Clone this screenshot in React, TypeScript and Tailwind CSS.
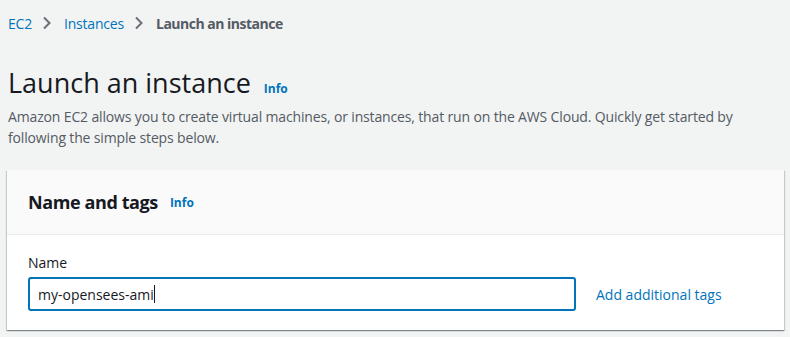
import React from "react";

export default function App() {
  return (
    <div
      className="w-[790px] h-[337px] overflow-hidden bg-[#f2f3f3] text-[#16191f]"
      style={{ fontFamily: '"Open Sans", "Noto Sans", Arial, sans-serif' }}
    >
      <div className="pl-[8px] pr-[6px]">
        {/* Breadcrumb */}
        <nav className="flex items-center h-[46px] text-[14px] tracking-[-0.2px]">
          <span className="text-[#0073bb]">EC2</span>
          <svg width="10" height="14" viewBox="0 0 10 14" className="ml-[10px] mr-[12px]">
            <path d="M2 1.5 L7.5 7 L2 12.5" fill="none" stroke="#687078" strokeWidth="2" />
          </svg>
          <span className="text-[#0073bb]">Instances</span>
          <svg width="10" height="14" viewBox="0 0 10 14" className="ml-[10px] mr-[12px]">
            <path d="M2 1.5 L7.5 7 L2 12.5" fill="none" stroke="#687078" strokeWidth="2" />
          </svg>
          <span className="font-bold text-[#545b64] tracking-[-0.5px]">Launch an instance</span>
        </nav>

        {/* Header */}
        <div className="mt-[19px] flex items-baseline">
          <h1 className="text-[27px] leading-[36px] font-normal text-[#16191f]">Launch an instance</h1>
          <span className="ml-[13px] text-[12px] font-bold text-[#0073bb]">Info</span>
        </div>
        <p className="text-[14px] leading-[21px] text-[#545b64] mt-[5px] tracking-[-0.15px]">
          Amazon EC2 allows you to create virtual machines, or instances, that run on the AWS Cloud. Quickly get started by following the simple steps below.
        </p>

        {/* Card */}
        <div className="mt-[22px] -ml-[1px] w-[777px] bg-white shadow-[0_1px_1px_0_rgba(0,28,36,0.3),1px_1px_1px_0_rgba(0,28,36,0.15),-1px_1px_1px_0_rgba(0,28,36,0.15)]">
          <div className="h-[65px] bg-[#fafafa] border-b border-[#eaeded] flex items-center px-[21px]">
            <h2 className="text-[18px] font-bold text-[#16191f] tracking-[-0.4px]">Name and tags</h2>
            <span className="ml-[12px] text-[12px] font-bold text-[#0073bb] mt-[2px]">Info</span>
          </div>
          <div className="px-[21px] pt-[18px] pb-[19px]">
            <label className="block text-[14px] leading-[20px] text-[#16191f]">Name</label>
            <div className="flex items-center mt-[4px]">
              <div className="w-[548px] h-[34px] border-2 border-[#0073bb] rounded-[3px] flex items-center px-[8px] text-[14px] text-[#16191f]">
                my-opensees-ami<span className="inline-block w-[1px] h-[18px] bg-[#16191f]" />
              </div>
              <span className="ml-[20px] text-[14px] text-[#0073bb]">Add additional tags</span>
            </div>
          </div>
        </div>
      </div>
    </div>
  );
}
